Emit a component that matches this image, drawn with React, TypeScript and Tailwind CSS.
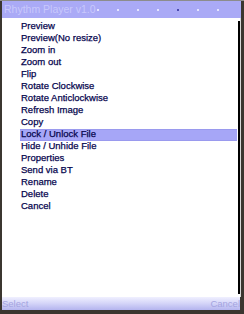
import React from "react";

const items = [
  "Preview",
  "Preview(No resize)",
  "Zoom in",
  "Zoom out",
  "Flip",
  "Rotate Clockwise",
  "Rotate Anticlockwise",
  "Refresh Image",
  "Copy",
  "Lock / Unlock File",
  "Hide / Unhide File",
  "Properties",
  "Send via BT",
  "Rename",
  "Delete",
  "Cancel",
];

const font = { fontFamily: '"Liberation Sans", Arial, sans-serif' };

export default function App() {
  return (
    <div className="w-[244px] h-[314px] bg-[#3b3630] flex flex-col overflow-hidden" style={font}>
      <div className="h-px bg-[#8c8c8c]" />
      <div className="h-[17px] ml-[2px] mr-[3px] bg-[#aaaaf6] flex items-center">
        <div className="w-[95px] pl-[2px] text-[10.5px] leading-none text-[#c8c8fc] whitespace-nowrap">
          Rhythm Player v1.0
        </div>
        <div className="flex gap-[18px] items-center">
          {[0, 1, 2, 3, 4, 5, 6].map((i) => (
            <div
              key={i}
              className={i === 4 ? "w-[2px] h-[2px] bg-[#4a4ab0]" : "w-[2px] h-[2px] bg-[#e4e4ff]"}
            />
          ))}
        </div>
      </div>
      <div className="flex flex-1 ml-[2px]">
        <div className="flex-1 bg-white pt-[3px] pl-[18px] pr-[1px]">
          {items.map((t, i) => (
            <div
              key={t}
              className={
                i === 9
                  ? "h-[12px] flex items-center pl-[1px] pb-[2px] text-[9.5px] leading-none text-[#06064e] [-webkit-text-stroke:0.25px_#06064e] bg-[#a6a6f7] border-y border-[#9a9aee]"
                  : "h-[12px] flex items-center pl-[1px] pb-[2px] text-[9.5px] leading-none text-[#06064e] [-webkit-text-stroke:0.25px_#06064e]"
              }
            >
              {t}
            </div>
          ))}
        </div>
        <div className="w-[2px] bg-white flex flex-col">
          <div className="mt-[3px] mb-[3px] flex-1 bg-black" />
        </div>
        <div className="w-px bg-[#d8d8d8]" />
        <div className="w-[3px] bg-[#3b3630]" />
      </div>
      <div className="h-[13px] ml-[2px] mr-[4px] bg-gradient-to-b from-[#f0f0ff] via-[#d4d4f8] to-[#b4b4ee] flex items-center justify-between">
        <span className="text-[9.5px] leading-none text-[#a4a4e0]">Select</span>
        <span className="text-[9.5px] leading-none text-[#a4a4e0]">Cancel</span>
      </div>
      <div className="h-[4px]" />
    </div>
  );
}
